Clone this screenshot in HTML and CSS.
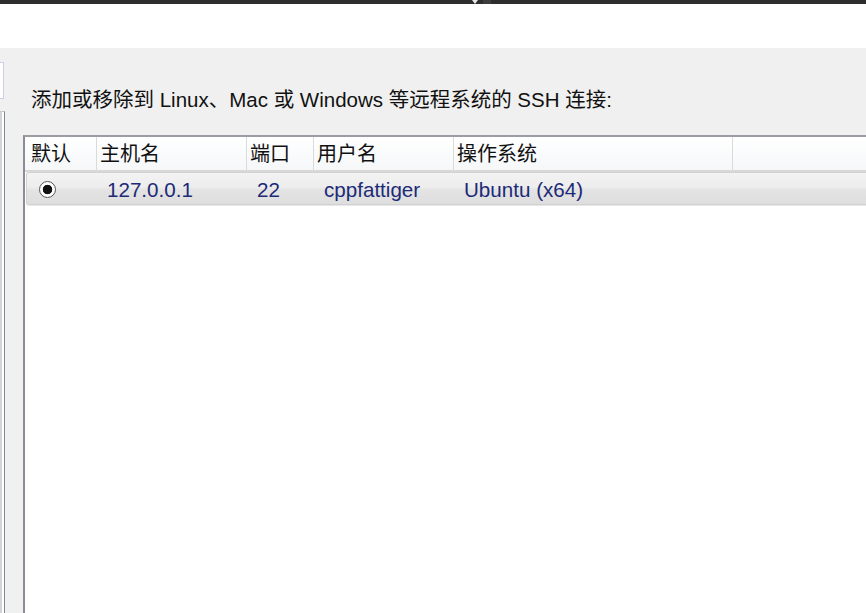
FILE: index.html
```html
<!DOCTYPE html>
<html lang="zh-CN">
<head>
<meta charset="utf-8">
<title>SSH 连接</title>
<link rel="stylesheet" href="styles.css">
</head>
<body>
<div class="topbar">
  <span class="tri"></span>
  <span class="knob"></span>
</div>
<div class="whiteband"></div>
<div class="main">
  <div class="side">
    <div class="stub"></div>
    <div class="panel"></div>
  </div>
  <div class="content">
    <p class="intro">添加或移除到 Linux、Mac 或 Windows 等远程系统的 SSH 连接:</p>
    <div class="table">
      <div class="thead">
        <div class="th first">默认</div>
        <div class="th">主机名</div>
        <div class="th">端口</div>
        <div class="th">用户名</div>
        <div class="th">操作系统</div>
        <div class="th last"></div>
      </div>
      <div class="row">
        <div class="td radio-cell"><span class="radio"></span></div>
        <div class="td">127.0.0.1</div>
        <div class="td">22</div>
        <div class="td">cppfattiger</div>
        <div class="td">Ubuntu (x64)</div>
        <div class="td"></div>
      </div>
    </div>
  </div>
</div>
</body>
</html>
```
FILE: styles.css
```css
html, body {
  margin: 0;
  padding: 0;
  height: 100%;
  overflow: hidden;
}
body {
  background: #f0f0f0;
  font-family: "Liberation Sans", "Noto Sans CJK SC", sans-serif;
  display: flex;
  flex-direction: column;
}
.topbar {
  height: 4px;
  background: #2d2d2d;
  display: flex;
  align-items: flex-start;
  padding-left: 472px;
  flex-shrink: 0;
}
.tri {
  width: 0;
  height: 0;
  border-left: 3px solid transparent;
  border-right: 3px solid transparent;
  border-top: 4px solid #e8e8e8;
}
.knob {
  width: 8px;
  height: 4px;
  margin-left: 5px;
  background: #3c3c3c;
}
.whiteband {
  height: 44px;
  background: #ffffff;
  flex-shrink: 0;
}
.main {
  flex: 1;
  display: flex;
  min-height: 0;
}
.side {
  width: 5px;
  display: flex;
  flex-direction: column;
  flex-shrink: 0;
}
.stub {
  margin-top: 14px;
  height: 35px;
  width: 3px;
  background: #ffffff;
  border: 1px solid #cfcfe3;
  border-left: none;
}
.panel {
  margin-top: 12px;
  flex: 1;
  width: 4px;
  border-right: 1px solid #7c889c;
  background: linear-gradient(to right, #d4d4d4 0, #d4d4d4 2px, #ffffff 2px);
  border-top: 1px solid #c8c8c8;
}
.content {
  flex: 1;
  margin-left: 18px;
  display: flex;
  flex-direction: column;
  min-width: 0;
}
.intro {
  margin: 40px 0 0 8px;
  font-size: 20.5px;
  line-height: 24px;
  color: #111;
  white-space: nowrap;
}
.table {
  margin-top: 23px;
  flex: 1;
  width: 860px;
  background: #ffffff;
  border-top: 2px solid #9c9ca4;
  border-left: 2px solid #8c8c94;
  box-shadow: inset 0 1px 0 #e4e4e4;
}
.thead {
  display: grid;
  grid-template-columns: 71px 150px 67px 140px 279px 1fr;
  height: 33px;
  background: linear-gradient(#ffffff, #f5f7f9);
  border-bottom: 2px solid #d8d8d8;
}
.th {
  font-size: 20px;
  line-height: 35px;
  color: #111;
  padding-left: 3px;
  border-left: 1px solid #dadada;
  white-space: nowrap;
}
.th.first {
  border-left: none;
  padding-left: 6px;
}
.row {
  display: grid;
  grid-template-columns: 70px 150px 67px 140px 279px 1fr;
  height: 31px;
  margin-left: 1px;
  background: linear-gradient(#f3f3f3 0%, #ededed 45%, #e3e3e3 55%, #dedede 100%);
  border: 1px solid #d2d2d2;
  border-right: none;
  border-radius: 3px 0 0 3px;
  box-shadow: 0 1px 0 #e8e8e8;
}
.td {
  font-size: 20.6px;
  line-height: 33px;
  color: #1c2a78;
  padding-left: 10px;
  white-space: nowrap;
}
.radio-cell {
  display: flex;
  align-items: center;
  padding-left: 12px;
}
.radio {
  width: 15px;
  height: 15px;
  border-radius: 50%;
  border: 1.5px solid #555;
  background: radial-gradient(circle, #111 0, #111 4.4px, #ffffff 5.1px);
}
```
